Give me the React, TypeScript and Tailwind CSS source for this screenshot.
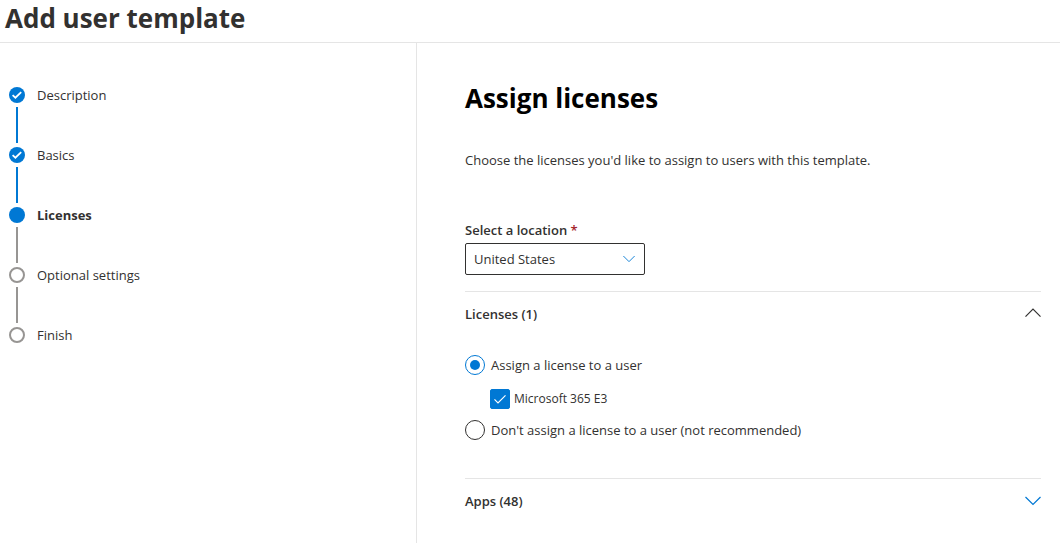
import { useState } from "react";

type StepState = "done" | "current" | "upcoming";

const steps: { label: string; state: StepState }[] = [
  { label: "Description", state: "done" },
  { label: "Basics", state: "done" },
  { label: "Licenses", state: "current" },
  { label: "Optional settings", state: "upcoming" },
  { label: "Finish", state: "upcoming" },
];

function StepMarker({ state }: { state: StepState }) {
  return (
    <svg viewBox="0 0 16 16" className="block size-4" aria-hidden="true">
      {state === "upcoming" ? (
        <circle cx="8" cy="8" r="7" fill="none" stroke="#979593" strokeWidth="2" />
      ) : (
        <circle cx="8" cy="8" r="8" fill="#0078d4" />
      )}
      {state === "done" && (
        <path d="M3.6 8.2 6.4 10.7 12.2 5.2" fill="none" stroke="#fff" strokeWidth="1.8" />
      )}
    </svg>
  );
}

function Chevron({ up = false, className }: { up?: boolean; className: string }) {
  return (
    <svg viewBox="0 0 16 16" className={className} fill="none" stroke="currentColor" aria-hidden="true">
      <path d={up ? "M0.5 10.7 8 3.2 15.5 10.7" : "M0.5 4 8 11.5 15.5 4"} strokeWidth="1.2" />
    </svg>
  );
}

function LicenseRadio({
  label,
  checked,
  onSelect,
}: {
  label: string;
  checked: boolean;
  onSelect: () => void;
}) {
  return (
    <label className="flex h-5 items-center gap-1.5">
      <input
        type="radio"
        name="license-choice"
        checked={checked}
        onChange={onSelect}
        className="grid size-5 shrink-0 appearance-none place-items-center rounded-full border border-[#323130] before:size-2.5 before:rounded-full checked:border-[#0078d4] checked:before:bg-[#0078d4]"
      />
      {label}
    </label>
  );
}

export default function App() {
  const [assign, setAssign] = useState(true);
  const [e3, setE3] = useState(true);
  const [licensesOpen, setLicensesOpen] = useState(true);
  const [appsOpen, setAppsOpen] = useState(false);

  return (
    <div className="flex min-h-screen flex-col bg-white font-['Open_Sans','Noto_Sans',sans-serif] text-[13px] leading-5 text-[#323130]">
      <header className="border-b border-[#e5e5e5] px-[5px] pt-0.5 pb-2">
        <h1 className="text-[26px] leading-8 font-bold">Add user template</h1>
      </header>

      <div className="flex grow">
        <nav aria-label="Progress" className="w-[417px] shrink-0 border-r border-[#e5e5e5] px-[9px] pt-[42px]">
          <ol>
            {steps.map((step, i) => (
              <li key={step.label} aria-current={step.state === "current" ? "step" : undefined}>
                <div className="flex h-5 items-center gap-3">
                  <StepMarker state={step.state} />
                  <span className={step.state === "current" ? "font-bold" : ""}>{step.label}</span>
                </div>
                {i < steps.length - 1 && (
                  <div
                    className={
                      step.state === "done"
                        ? "mx-[7px] my-0.5 h-9 w-0.5 bg-[#0078d4]"
                        : "mx-[7px] my-0.5 h-9 w-0.5 bg-[#979593]"
                    }
                  />
                )}
              </li>
            ))}
          </ol>
        </nav>

        <main className="min-w-0 grow pt-[35px] pr-[19px] pl-12">
          <h2 className="text-[26px] leading-10 font-bold text-black">Assign licenses</h2>
          <p className="mt-8">Choose the licenses you'd like to assign to users with this template.</p>

          <div className="mt-[50px]">
            <label htmlFor="location" className="block font-semibold">
              Select a location <span className="text-[#a4262c]">*</span>
            </label>
            <div className="relative mt-[3px] w-[180px]">
              <select
                id="location"
                required
                defaultValue="us"
                className="h-8 w-full appearance-none rounded-[2px] border border-[#323130] bg-white pr-7 pl-2"
              >
                <option value="us">United States</option>
                <option value="ca">Canada</option>
              </select>
              <Chevron className="pointer-events-none absolute top-2.5 right-2.5 size-3 text-[#0078d4]" />
            </div>
          </div>

          <section className="mt-4 border-t border-[#e5e5e5]">
            <h3>
              <button
                type="button"
                aria-expanded={licensesOpen}
                onClick={() => setLicensesOpen(!licensesOpen)}
                className="flex h-11 w-full items-center justify-between font-semibold"
              >
                Licenses (1)
                <Chevron up={licensesOpen} className="size-4" />
              </button>
            </h3>
            {licensesOpen && (
              <div className="pt-[19px] pb-[38px]">
                <LicenseRadio
                  label="Assign a license to a user"
                  checked={assign}
                  onSelect={() => setAssign(true)}
                />
                <label className="mt-3.5 mb-[11px] ml-[25px] flex h-5 items-center gap-1 text-xs leading-5">
                  <span className="grid size-5 shrink-0 place-items-center">
                    <input
                      type="checkbox"
                      checked={e3}
                      onChange={() => setE3(!e3)}
                      className="col-start-1 row-start-1 size-5 appearance-none rounded-[2px] border border-[#323130] checked:border-[#0078d4] checked:bg-[#0078d4]"
                    />
                    <svg
                      viewBox="0 0 20 20"
                      className="pointer-events-none col-start-1 row-start-1 size-5"
                      fill="none"
                      stroke="#fff"
                      aria-hidden="true"
                    >
                      <path d="M4.5 10.3 8 13.8 15.5 6.3" strokeWidth="1.2" />
                    </svg>
                  </span>
                  Microsoft 365 E3
                </label>
                <LicenseRadio
                  label="Don't assign a license to a user (not recommended)"
                  checked={!assign}
                  onSelect={() => setAssign(false)}
                />
              </div>
            )}
          </section>

          <section className="border-t border-[#e5e5e5]">
            <h3>
              <button
                type="button"
                aria-expanded={appsOpen}
                onClick={() => setAppsOpen(!appsOpen)}
                className="flex h-11 w-full items-center justify-between font-semibold"
              >
                Apps (48)
                <Chevron up={appsOpen} className="size-4 text-[#0078d4]" />
              </button>
            </h3>
          </section>
        </main>
      </div>
    </div>
  );
}
